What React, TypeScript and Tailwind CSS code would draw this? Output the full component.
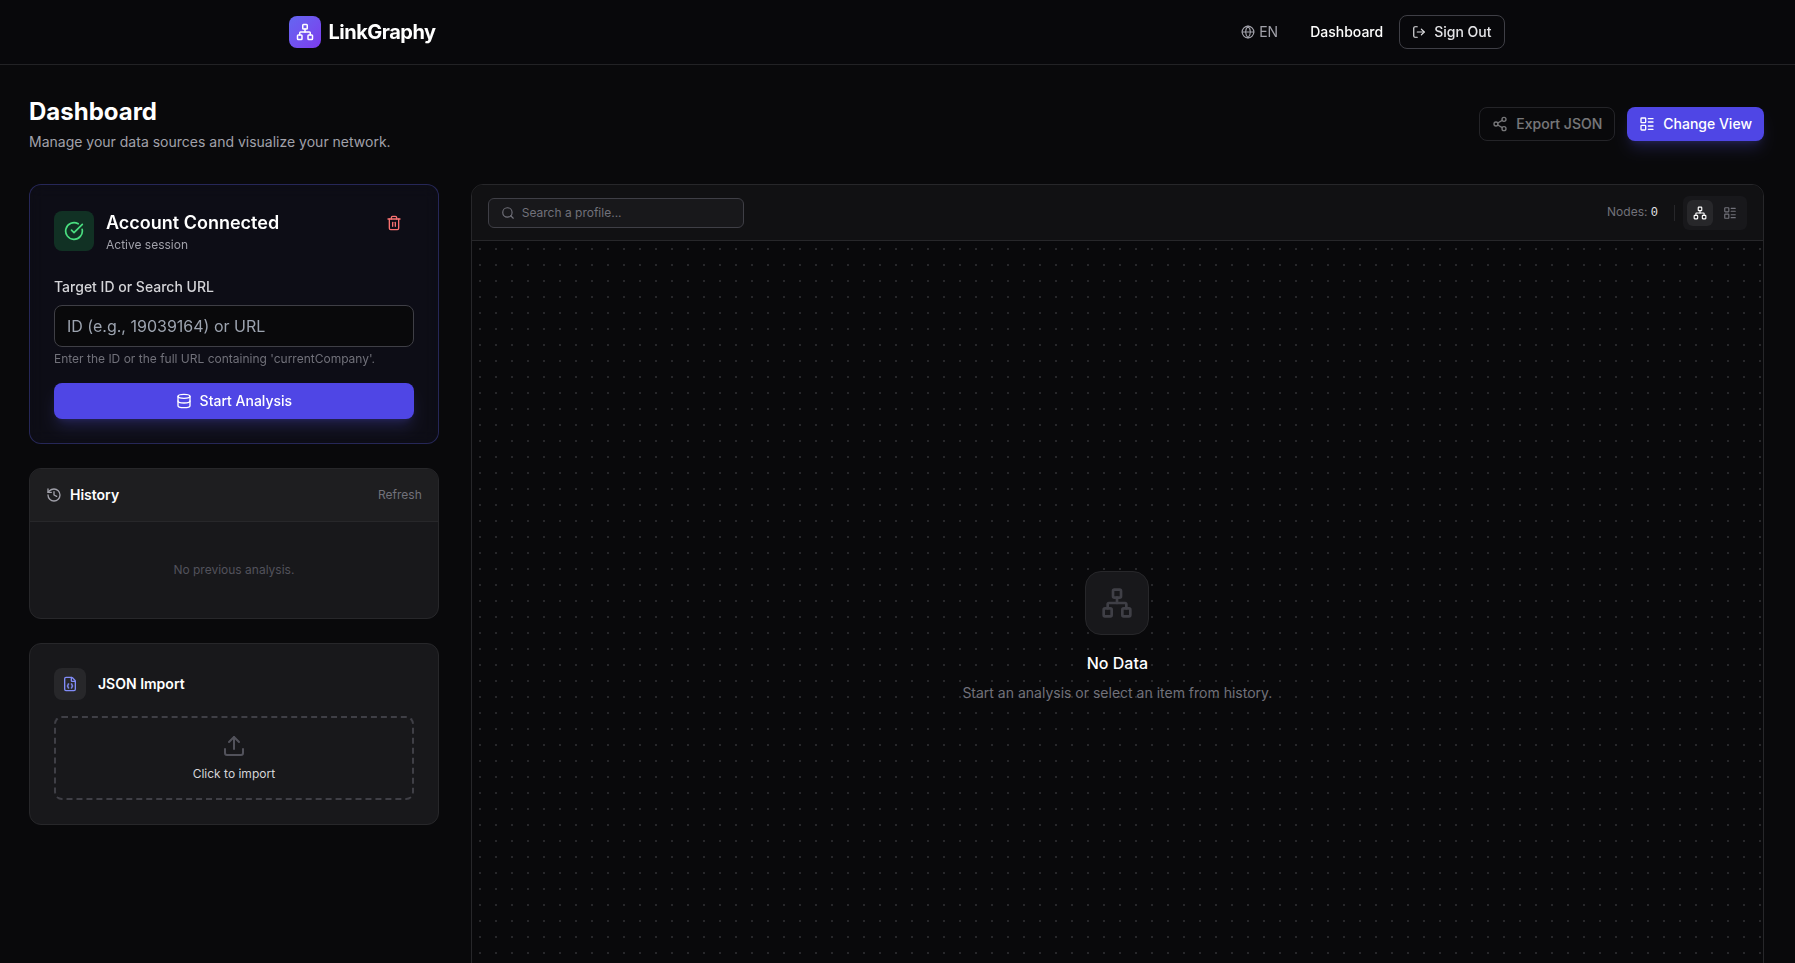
import { useState } from 'react';
import type { ButtonHTMLAttributes, ReactNode } from 'react';
import { clsx } from 'clsx';
import {
  CircleCheckBig,
  Database,
  FileJson,
  Globe,
  History,
  LayoutList,
  LogOut,
  Network,
  Search,
  Share2,
  Trash2,
  Upload,
} from 'lucide-react';

type View = 'graph' | 'list';

interface ButtonProps extends ButtonHTMLAttributes<HTMLButtonElement> {
  variant?: 'primary' | 'outline';
  icon?: ReactNode;
}

function Button({ variant = 'primary', icon, className, children, ...props }: ButtonProps) {
  return (
    <button
      type="button"
      className={clsx(
        'flex items-center justify-center gap-2 rounded-lg px-3 text-sm font-medium transition-colors disabled:opacity-50',
        variant === 'primary' && 'bg-[#4f46e5] text-white shadow-lg shadow-indigo-500/20 hover:bg-indigo-500',
        variant === 'outline' && 'border border-[#3f3f46] text-[#e4e4e7] hover:bg-[#27272a]',
        className
      )}
      {...props}
    >
      {icon}
      {children}
    </button>
  );
}

function Navbar() {
  return (
    <header className="fixed inset-x-0 top-0 z-10 border-b border-[#222225] bg-[#09090b]/80 pr-0.5 backdrop-blur-md">
      <div className="mx-auto flex h-16 max-w-7xl items-center justify-between px-8">
        <a href="#" className="flex items-center gap-2">
          <span className="flex size-8 items-center justify-center rounded-lg bg-linear-to-br from-[#6366f1] to-[#7c3aed] text-white">
            <Network size={18} />
          </span>
          <span className="text-xl font-bold tracking-tight text-white">LinkGraphy</span>
        </a>
        <nav className="flex items-center gap-4 text-sm">
          <button type="button" className="mr-4 flex items-center gap-1 text-[#a1a1aa] hover:text-white">
            <Globe size={14} />
            EN
          </button>
          <a href="#" className="font-medium text-white">
            Dashboard
          </a>
          <Button variant="outline" className="py-1.5" icon={<LogOut size={14} />}>
            Sign Out
          </Button>
        </nav>
      </div>
    </header>
  );
}

function AccountCard() {
  return (
    <section className="rounded-xl border border-[#6366f1]/30 bg-[#6366f1]/5 p-6 backdrop-blur-sm">
      <div className="mb-6 flex items-start justify-between">
        <div className="flex items-center gap-3">
          <div className="flex size-10 items-center justify-center rounded-lg bg-[#22c55e]/20 text-[#4ade80]">
            <CircleCheckBig size={20} />
          </div>
          <div>
            <h2 className="text-lg font-semibold text-white">Account Connected</h2>
            <p className="text-xs text-[#a1a1aa]">Active session</p>
          </div>
        </div>
        <button type="button" aria-label="Disconnect" className="rounded-lg px-3 py-1.5 text-[#f87171] hover:bg-red-500/10">
          <Trash2 size={16} />
        </button>
      </div>

      <label htmlFor="target" className="mb-2 block text-sm font-medium text-[#d4d4d8]">
        Target ID or Search URL
      </label>
      <input
        id="target"
        type="text"
        placeholder="ID (e.g., 19039164) or URL"
        className="w-full rounded-lg border border-[#3f3f46] bg-[#09090b] px-3 py-2 text-base text-white outline-none placeholder:text-[#9ca3af] focus:border-indigo-500"
      />
      <p className="mt-1 mb-4 text-xs text-[#71717a]">Enter the ID or the full URL containing 'currentCompany'.</p>
      <Button className="w-full py-2" icon={<Database size={16} />}>
        Start Analysis
      </Button>
    </section>
  );
}

function HistoryCard() {
  return (
    <section className="overflow-hidden rounded-xl border border-[#27272a] bg-[#18181b]">
      <div className="flex items-center justify-between border-b border-[#27272a] bg-[#1e1e20] p-4">
        <h3 className="flex items-center gap-2 text-sm font-semibold text-white">
          <History size={16} className="text-[#a1a1aa]" />
          History
        </h3>
        <button type="button" className="text-xs text-[#71717a] hover:text-white">
          Refresh
        </button>
      </div>
      <p className="py-10 text-center text-xs text-[#52525b]">No previous analysis.</p>
    </section>
  );
}

function ImportCard() {
  return (
    <section className="rounded-xl border border-[#27272a] bg-[#18181b] p-6">
      <div className="mb-4 flex items-center gap-3">
        <div className="flex size-8 items-center justify-center rounded-lg bg-[#27272a] text-[#818cf8]">
          <FileJson size={16} />
        </div>
        <h3 className="text-sm font-semibold text-white">JSON Import</h3>
      </div>
      <button
        type="button"
        className="flex w-full flex-col items-center gap-2 rounded-lg border-2 border-dashed border-[#3f3f46] p-4 hover:border-indigo-500"
      >
        <Upload size={24} className="text-[#52525b]" />
        <span className="text-xs text-[#d4d4d8]">Click to import</span>
      </button>
    </section>
  );
}

interface GraphPanelProps {
  view: View;
  onViewChange: (view: View) => void;
}

function GraphPanel({ view, onViewChange }: GraphPanelProps) {
  const toggleClass = (active: boolean) =>
    clsx('rounded-md p-1.5', active ? 'bg-[#27272a] text-white' : 'text-[#71717a] hover:text-white');

  return (
    <section className="flex min-h-[850px] flex-col overflow-hidden rounded-xl border border-[#27272a]">
      {/* Toolbar */}
      <div className="flex h-14 items-center justify-between border-b border-[#27272a] bg-[#111113] px-4">
        <div className="relative w-64">
          <Search size={14} className="absolute top-2 left-[13px] text-[#71717a]" />
          <input
            type="text"
            aria-label="Search a profile"
            placeholder="Search a profile..."
            className="block w-full rounded-md border border-[#3f3f46] bg-[#18181b] py-1.5 pr-3 pl-[33px] text-xs text-white outline-none placeholder:text-[#71717a] focus:border-indigo-500"
          />
        </div>
        <div className="flex items-center gap-2">
          <span className="mr-2 text-xs text-[#71717a]">
            Nodes: <span className="font-['Liberation_Mono',monospace] text-[#e4e4e7]">0</span>
          </span>
          <div className="h-4 w-px bg-[#27272a]" />
          <div className="flex gap-1 rounded-md bg-[#18181b] p-1">
            <button type="button" aria-label="Graph view" className={toggleClass(view === 'graph')} onClick={() => onViewChange('graph')}>
              <Network size={14} />
            </button>
            <button type="button" aria-label="List view" className={toggleClass(view === 'list')} onClick={() => onViewChange('list')}>
              <LayoutList size={14} />
            </button>
          </div>
        </div>
      </div>

      {/* Empty state on the dotted canvas */}
      <div className="flex flex-1 flex-col items-center justify-center bg-[radial-gradient(#27272a_1px,transparent_1px)] bg-size-[16px_16px]">
        <div className="flex size-16 items-center justify-center rounded-2xl border border-[#27272a] bg-[#18181b] text-[#3f3f46]">
          <Network size={32} />
        </div>
        <h3 className="mt-4 text-base font-medium text-white">No Data</h3>
        <p className="mt-2 text-sm text-[#71717a]">Start an analysis or select an item from history.</p>
      </div>
    </section>
  );
}

export default function App() {
  const [view, setView] = useState<View>('graph');

  return (
    <div className="min-h-screen bg-[#09090b] pr-0.5 font-['Inter',sans-serif] text-[#e4e4e7]">
      <Navbar />
      <main className="px-[29px] pt-24 pb-8">
        <div className="mb-8 flex items-center justify-between">
          <div>
            <h1 className="text-2xl font-bold text-white">Dashboard</h1>
            <p className="mt-1 text-sm text-[#a1a1aa]">Manage your data sources and visualize your network.</p>
          </div>
          <div className="flex gap-3">
            <Button variant="outline" className="py-1.5" icon={<Share2 size={16} />} disabled>
              Export JSON
            </Button>
            <Button
              className="py-1.5"
              icon={<LayoutList size={16} />}
              onClick={() => setView(view === 'graph' ? 'list' : 'graph')}
            >
              Change View
            </Button>
          </div>
        </div>

        <div className="grid grid-cols-12 gap-8">
          <div className="col-span-3 flex flex-col gap-6">
            <AccountCard />
            <HistoryCard />
            <ImportCard />
          </div>
          <div className="col-span-9">
            <GraphPanel view={view} onViewChange={setView} />
          </div>
        </div>
      </main>
    </div>
  );
}
